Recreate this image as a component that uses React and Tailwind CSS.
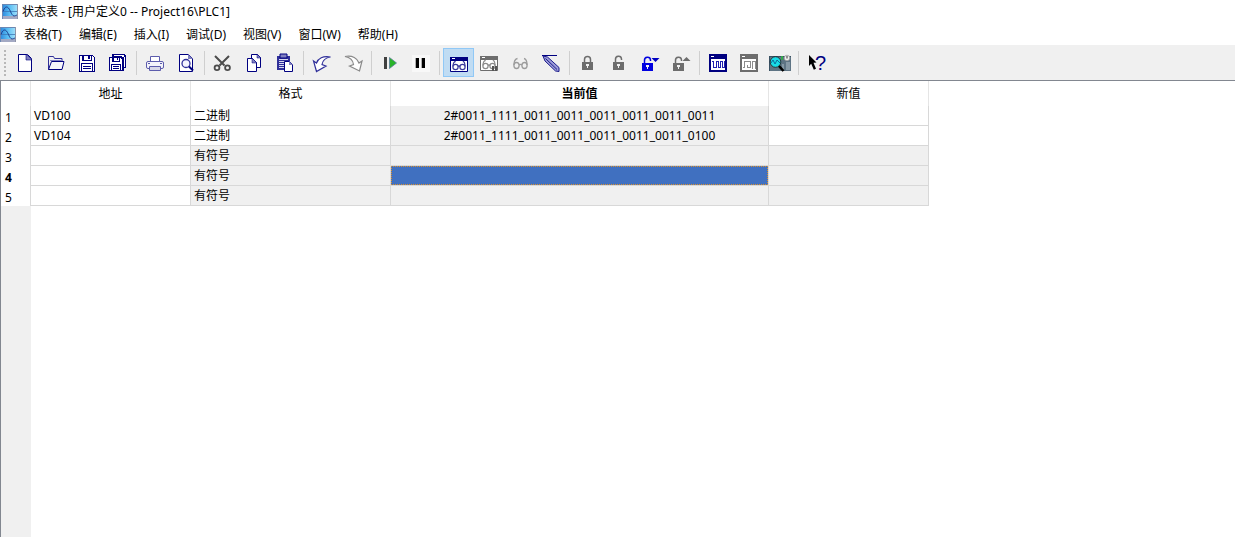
import clsx from 'clsx';

const menus = [
    '表格(T)',
    '编辑(E)',
    '插入(I)',
    '调试(D)',
    '视图(V)',
    '窗口(W)',
    '帮助(H)',
];

const columns = [
    { label: '地址', width: 'w-40' },
    { label: '格式', width: 'w-[200px]' },
    { label: '当前值', width: 'w-[378px]', active: true },
    { label: '新值', width: 'w-40' },
];

const rows = [
    { address: 'VD100', format: '二进制', value: '2#0011_1111_0011_0011_0011_0011_0011_0011', used: true },
    { address: 'VD104', format: '二进制', value: '2#0011_1111_0011_0011_0011_0011_0011_0100', used: true },
    { format: '有符号' },
    { format: '有符号', selected: true },
    { format: '有符号' },
];

const NAVY = '#000080';
const GRAY = '#6d6d6d';

function AppIcon() {
    return (
        <svg viewBox="0 0 16 16" className="h-4 w-4 shrink-0" aria-hidden="true">
            <defs>
                <linearGradient id="sky" x1="0" y1="0" x2="1" y2="0">
                    <stop offset="0" stopColor="#2a86dc" />
                    <stop offset="0.5" stopColor="#5cc0f4" />
                    <stop offset="1" stopColor="#a8e2fa" />
                </linearGradient>
            </defs>
            <rect width="16" height="13" fill="url(#sky)" />
            <rect y="12" width="16" height="3" fill="#a4aac4" />
            <path d="M0 .5h16M.5 0v15" stroke="#6a88b4" fill="none" />
            <path d="M15.5 0v15" stroke="#8d93a8" />
            <path d="M1 7.5h14" stroke="#3c78b8" strokeWidth=".8" />
            <path d="M1 7.500C3 1.500 6 1.500 8.500 7.500s4 4.500 6.500 3.500" stroke="#1c3c8c" fill="none" />
        </svg>
    );
}

function Glasses({ color }) {
    return (
        <g fill="none" stroke={color} strokeWidth="1.2">
            <ellipse cx="11.5" cy="18" rx="2.6" ry="2.6" />
            <ellipse cx="18.5" cy="18" rx="2.6" ry="2.6" />
            <path d="M14 17.5q1-1 2 0M9 17.5c0-3 1-5 2.7-5.2M21 17.5c0-3-.5-5-2.2-5.2" />
        </g>
    );
}

function Padlock({ color, open }) {
    return (
        <>
            <rect x="9" y="14" width="11" height="8" fill={color} />
            <path
                d={open ? 'M11.5 14v-2.5a3 3 0 0 1 6-.5v1' : 'M11.5 14v-2.5a3 3 0 0 1 6 0V14'}
                fill="none"
                stroke={color}
                strokeWidth="1.5"
            />
            <path d="M13 16h3v2h-1v2h-1v-2h-1z" fill="#f0f0f0" />
        </>
    );
}

const drawings = {
    new: (
        <>
            <path d="M8.5 6.5h9l4 4v13h-13z" fill="#fff" stroke={NAVY} />
            <path d="M16 6v6h6z" fill="#8080c0" stroke={NAVY} strokeWidth=".6" />
        </>
    ),
    open: (
        <g fill="none" stroke={NAVY}>
            <path d="M7.5 21.5v-13h5l1 2h7.5v3" stroke="#30309a" />
            <path d="M7.5 21.5l3-8h12.5l-2 8z" fill="#f6f6fb" />
            <path d="M9 12.5h11" stroke="#8080c0" />
        </g>
    ),
    save: (
        <g shapeRendering="crispEdges">
            <path d="M7.5 7.5h13l2 2v14h-15z" fill="#fff" stroke={NAVY} />
            <path d="M10 7h10v6H10z" fill={NAVY} />
            <path d="M12 8h7v4h-7z" fill="#fff" />
            <path d="M16 8h2v3h-2z" fill={NAVY} />
            <path d="M9.5 23v-7.5h11V23M11 18.5h8M11 20.5h8" fill="none" stroke={NAVY} />
        </g>
    ),
    saveAll: (
        <g shapeRendering="crispEdges">
            <path d="M9 6h12l2 2v12h-2v3H9z" fill={NAVY} />
            <path d="M11 7h9l1 1v1h-2V8h-8zM21 9h1v10h-1z" fill="#fff" />
            <path d="M6.5 9.5h11l2 2v11h-13z" fill="#fff" stroke={NAVY} />
            <path d="M9 9h8v5H9z" fill={NAVY} />
            <path d="M11 10h5v3h-5z" fill="#fff" />
            <path d="M14 10h1v2h-1z" fill={NAVY} />
            <path d="M8.5 22v-5.5h9V22M10 18.5h6M10 20.5h6" fill="none" stroke={NAVY} />
        </g>
    ),
    print: (
        <g fill="none" stroke="#5c5cac">
            <path d="M10.5 13.5v-5h9v5" fill="#fff" />
            <rect x="6.5" y="13.5" width="17" height="7" rx="1.5" fill="#f4f4fa" />
            <path d="M9.5 18.5h11v4h-11z" fill="#d8d8e8" />
            <path d="M8 15.5h2M20 15.5h2" />
        </g>
    ),
    preview: (
        <>
            <path d="M8.5 6.5h9l4 4v13h-13z" fill="#fff" stroke={NAVY} />
            <path d="M17 6v5h5z" fill="#8080c0" />
            <circle cx="15" cy="15.5" r="4" fill="#f4f4ff" stroke="#30309a" strokeWidth="1.3" />
            <path d="M18 18.5l4 4" stroke={NAVY} strokeWidth="2" />
        </>
    ),
    cut: (
        <g fill="none" stroke="#4c4c4c">
            <path d="M7 8l9.5 9.5M21 8l-9.5 9.5" strokeWidth="2" />
            <circle cx="9" cy="19.7" r="2.4" strokeWidth="1.8" />
            <circle cx="19.5" cy="19.7" r="2.4" strokeWidth="1.8" />
        </g>
    ),
    copy: (
        <g fill="#fff" stroke={NAVY}>
            <path d="M12.5 6.5h6l3 3v10h-9z" />
            <path d="M18 6v4h4z" fill="#8080c0" strokeWidth=".5" />
            <path d="M8.5 10.5h5l4 4v9h-9z" />
            <path d="M13 10v5h5z" fill="#8080c0" strokeWidth=".5" />
        </g>
    ),
    paste: (
        <>
            <path d="M7 8h13v14H7z" fill="#30309a" />
            <path d="M10 6h7v4h-7z" fill="#8080c0" stroke={NAVY} />
            <path d="M9 11.5h9M9 13.5h6M9 15.5h5M9 17.5h5M9 19.5h5" stroke="#d8d8f0" />
            <path d="M14.5 13.5h5l3 3v7h-8z" fill="#fff" stroke={NAVY} />
            <path d="M19 13v4h4z" fill="#8080c0" />
        </>
    ),
    undo: (
        <path
            d="M6.5 13l3 2C11 10.5 16 7.5 23.5 9c-5 .8-8 4-8.5 7.5l4 1.5-9.5 5.5z"
            fill="#fff"
            stroke="#30309a"
            strokeWidth="1.2"
        />
    ),
    redo: (
        <path
            d="M24 13l-3 2C19.5 10.5 14.5 7 7 8.5c5 .8 8 4 8.5 8l-4 1.5 10 5z"
            fill="#fff"
            stroke="#8a8a8a"
            strokeWidth="1.2"
        />
    ),
    run: (
        <>
            <path d="M9 9h3v12H9z" fill="#404040" />
            <path d="M14.5 9.5l7 5.5-7 5.5z" fill="#28b428" stroke="#5a7a9a" strokeWidth=".8" />
        </>
    ),
    pause: (
        <>
            <path d="M6 7h18v17H6z" fill="#f8f8f8" />
            <path d="M10 10h3v10h-3zM16 10h3v10h-3z" fill="#000" />
            <path d="M9.5 10v10M15.5 10v10" stroke="#b0b0b0" />
        </>
    ),
    chartStatus: (
        <>
            <path d="M7.5 9.5h17v14h-17z" fill="#fff" stroke={NAVY} />
            <path d="M7 9h18v4H7z" fill={NAVY} />
            <path d="M9 10.5h3" stroke="#fff" />
            <g transform="translate(1 1)">
                <Glasses color="#3c3c9c" />
            </g>
        </>
    ),
    pauseStatus: (
        <>
            <path d="M6.5 8.5h17v14h-17z" fill="#fff" stroke={GRAY} />
            <path d="M6 8h18v4H6z" fill={GRAY} />
            <path d="M8 9.5h3" stroke="#fff" />
            <Glasses color="#8c8c8c" />
            <path d="M18 18h2v5h-2zM21 18h2v5h-2z" fill="#555" />
        </>
    ),
    read: (
        <g fill="none" stroke="#9c9c9c" strokeWidth="1.3">
            <ellipse cx="11.5" cy="17.5" rx="2.6" ry="3" />
            <ellipse cx="19.5" cy="17.5" rx="2.6" ry="3" />
            <path d="M14 17q1.5-1.2 3 0M9 17c0-3.5 1-6 3.5-6.5M22 17c0-3.5-.5-6-3-6.5" />
        </g>
    ),
    write: (
        <>
            <path d="M6 7.5h15" stroke={NAVY} />
            <path d="M7 8l4.5 1 11.5 10.5v4l-3.5-.5L9 13z" fill="#9c9cd8" stroke="#1c1c8c" />
            <path d="M9.5 10.5l11.5 11" stroke="#1c1c8c" />
        </>
    ),
    force: <Padlock color={GRAY} />,
    unforce: <Padlock color={GRAY} open />,
    forceAll: (
        <>
            <g transform="translate(-2 1)">
                <Padlock color="#0000e0" open />
            </g>
            <path d="M16.5 10h8l-4 4z" fill="#0000c0" />
        </>
    ),
    unforceAll: (
        <>
            <g transform="translate(-2 1)">
                <Padlock color={GRAY} open />
            </g>
            <path d="M16.5 13h8l-4-4z" fill={GRAY} />
        </>
    ),
    trend: (
        <g shapeRendering="crispEdges">
            <path d="M6 6h18v18H6z" fill={NAVY} />
            <path d="M8 8h3v1H8z" fill="#fff" />
            <path d="M8 11h14v11H8z" fill="#fff" />
            <path d="M9 13.5h1.5v6h3v-6h2v6h2v-6h2v6h1.5V13" fill="none" stroke="#2020b0" />
        </g>
    ),
    trendPause: (
        <g shapeRendering="crispEdges">
            <path d="M6 6h18v18H6z" fill={GRAY} />
            <path d="M8 8h3v1H8z" fill="#fff" />
            <path d="M8 11h14v11H8z" fill="#fff" />
            <path d="M9 19.5h1.5v-6h6v6h-3v-3M18.5 21v-7.5h2.5v7" fill="none" stroke="#8c8c8c" />
        </g>
    ),
    monitor: (
        <>
            <path d="M4 8h22v15H4z" fill="#5e7484" />
            <path d="M4 8.5h22M4.5 8v15" stroke="#3a5264" />
            <path d="M17 16h2v6h-2zM21 14h4v8h-4z" fill="#8799a6" />
            <circle cx="22" cy="10" r="2.8" fill="#eee" stroke="#888" strokeWidth=".6" />
            <path d="M22 8v2.5" stroke="#333" />
            <path d="M16 8h2v4h-2z" fill="#36a84c" />
            <circle cx="10.5" cy="14" r="5.3" fill="#18dce8" stroke="#222" strokeWidth=".8" />
            <path d="M6 15l2-3 2 4 2-4 3 3" fill="none" stroke="#0c6c9c" />
            <path d="M14 18l4.5 5" stroke="#000" strokeWidth="2.6" />
        </>
    ),
    help: (
        <>
            <path d="M7 7l7.5 7.5-3 .3 2.5 6-2.2 1-2.6-6L7 18z" fill="#000" />
            <text x="13" y="22" fontSize="20" fill={NAVY} className="font-['Liberation_Sans',sans-serif]">
                ?
            </text>
        </>
    ),
};

const toolGroups = [
    [['new', '新建'], ['open', '打开'], ['save', '保存'], ['saveAll', '全部保存']],
    [['print', '打印'], ['preview', '打印预览']],
    [['cut', '剪切'], ['copy', '复制'], ['paste', '粘贴']],
    [['undo', '撤消'], ['redo', '重做']],
    [['run', '运行'], ['pause', '停止']],
    [['chartStatus', '状态表监控'], ['pauseStatus', '暂停监控'], ['read', '单次读取'], ['write', '全部写入']],
    [['force', '强制'], ['unforce', '取消强制'], ['forceAll', '读取全部强制'], ['unforceAll', '取消全部强制']],
    [['trend', '趋势图'], ['trendPause', '暂停趋势图'], ['monitor', '监视']],
    [['help', '帮助']],
];

function ToolButton({ name, label, pressed }) {
    return (
        <button
            type="button"
            aria-label={label}
            aria-pressed={pressed}
            className={clsx(
                'h-[29px] w-[31px]',
                pressed && 'bg-[#c0dcf3] outline -outline-offset-1 outline-[#90c8f6]',
            )}
        >
            <svg viewBox="0 0 31 29" className="h-full w-full" aria-hidden="true">
                {drawings[name]}
            </svg>
        </button>
    );
}

function Toolbar() {
    return (
        <div
            role="toolbar"
            className="flex items-center bg-[#f0f0f0] pt-0.5 pb-[3px] pl-1"
        >
            <div className="mr-1 h-[26px] w-0.5 bg-[repeating-linear-gradient(#b8b8b8_0_2px,transparent_2px_4px)]" />

            {toolGroups.map((group, index) => (
                <div key={group[0][0]} className="flex items-center">
                    {index > 0 && (
                        <div className="mr-[3px] ml-0.5 h-6 w-px bg-[#cfcfcf]" />
                    )}

                    {group.map(([name, label]) => (
                        <ToolButton
                            key={name}
                            name={name}
                            label={label}
                            pressed={name === 'chartStatus'}
                        />
                    ))}
                </div>
            ))}
        </div>
    );
}

function StatusTable() {
    return (
        <table className="w-[928px] table-fixed border-separate border-spacing-0">
            <thead>
                <tr className="h-[25px]">
                    <th className="w-[30px] border-r border-[#e5e5e5]" />

                    {columns.map((column) => (
                        <th
                            key={column.label}
                            scope="col"
                            className={clsx(
                                'border-r border-[#e5e5e5] p-0 text-center',
                                column.width,
                                column.active ? 'font-bold' : 'font-normal',
                            )}
                        >
                            {column.label}
                        </th>
                    ))}
                </tr>
            </thead>

            <tbody>
                {rows.map((row, index) => (
                    <tr key={index} className="h-5">
                        <th
                            scope="row"
                            className={clsx(
                                'border-r border-[#d8d8d8] p-0 pl-1 text-left align-bottom',
                                row.selected ? 'font-bold' : 'font-normal',
                            )}
                        >
                            {index + 1}
                        </th>

                        <td className="border-r border-b border-[#d8d8d8] p-0 pl-[3px]">
                            {row.address}
                        </td>

                        <td
                            className={clsx(
                                'border-r border-b border-[#d8d8d8] p-0 pl-[3px]',
                                !row.used && 'bg-[#f0f0f0]',
                            )}
                        >
                            {row.format}
                        </td>

                        <td className="border-r border-b border-[#d8d8d8] bg-[#f0f0f0] p-0 text-center">
                            {row.selected ? (
                                <div className="h-[19px] border border-dotted border-[#d89030] bg-[#4070c0]" />
                            ) : (
                                row.value
                            )}
                        </td>

                        <td
                            className={clsx(
                                'border-r border-b border-[#d8d8d8] p-0',
                                !row.used && 'bg-[#f0f0f0]',
                            )}
                        />
                    </tr>
                ))}
            </tbody>
        </table>
    );
}

export default function App() {
    return (
        <div className="flex min-h-screen flex-col bg-white font-['Noto_Sans','Noto_Sans_CJK_SC',sans-serif] text-xs leading-4 text-black">
            <header className="flex h-6 items-center gap-1 pl-0.5">
                <AppIcon />
                <h1>状态表 - [用户定义0 -- Project16\PLC1]</h1>
            </header>

            <nav className="flex h-[22px] items-center gap-[17px] border-b border-[#f0f0f0]">
                <div className="-mr-[9px]">
                    <AppIcon />
                </div>

                {menus.map((menu) => (
                    <button key={menu} type="button">
                        {menu}
                    </button>
                ))}
            </nav>

            <Toolbar />

            <main className="flex flex-1 flex-col border-t border-l border-[#828790]">
                <StatusTable />
                <div className="w-[30px] flex-1 bg-[#f0f0f0]" />
            </main>
        </div>
    );
}
